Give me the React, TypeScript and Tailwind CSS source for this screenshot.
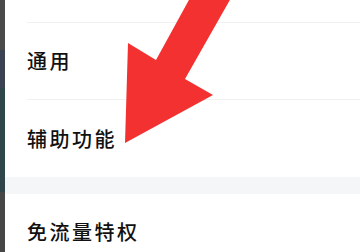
const rows = ['通用', '辅助功能']

export default function App() {
  return (
    <div className="relative flex h-[252px] w-[360px] overflow-hidden bg-white" style={{ fontFamily: '"Noto Sans CJK SC", "Noto Sans", sans-serif' }}>
      {/* left edge strip */}
      <div className="flex w-[5px] flex-shrink-0 flex-col">
        <div className="h-[50px] bg-[#4a4a4a]" />
        <div className="h-[38px] bg-[#3b4352]" />
        <div className="h-[104px] bg-[#2e464a]" />
        <div className="flex-1 bg-[#464646]" />
      </div>

      {/* settings list */}
      <div className="flex flex-1 flex-col">
        <div className="ml-[22px] h-[23px] flex-shrink-0 border-b border-[#f0f0f0]" />
        {rows.map((label, i) => (
          <div
            key={label}
            className={`ml-[22px] flex h-[77px] flex-shrink-0 items-center ${i === 0 ? 'border-b border-[#f0f0f0]' : ''}`}
          >
            <span className="text-[20px] font-medium leading-none tracking-[2.5px] text-[#111]">{label}</span>
          </div>
        ))}
        <div className="h-[17px] flex-shrink-0 bg-[#f5f6f8]" />
        <div className="ml-[22px] flex h-[76px] flex-shrink-0 items-center">
          <span className="text-[20px] font-medium leading-none tracking-[2.5px] text-[#111]">免流量特权</span>
        </div>
      </div>

      {/* red arrow overlay */}
      <svg className="pointer-events-none absolute left-0 top-0" width="360" height="252" viewBox="0 0 360 252">
        <polygon points="190,-2 231,-2 185,79 213,95 125,143 128,43 156,60" fill="#f43131" />
      </svg>
    </div>
  )
}
